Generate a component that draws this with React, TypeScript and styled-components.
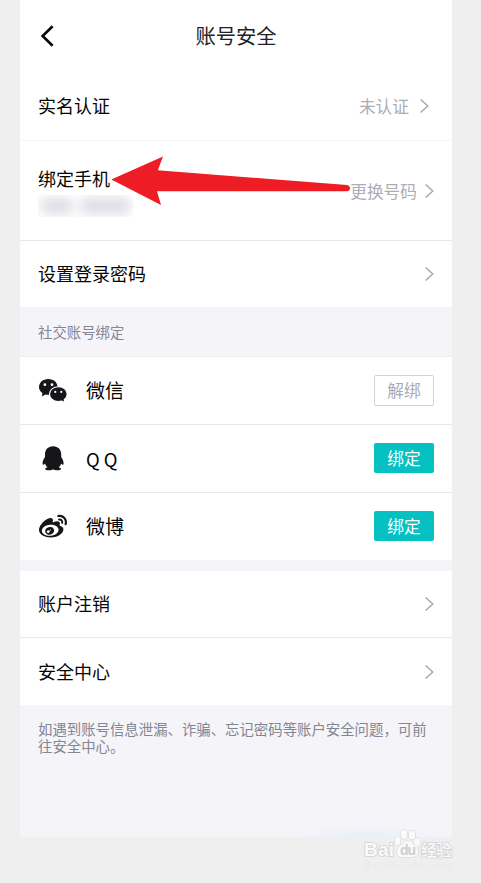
import React from 'react';
import styled, { createGlobalStyle } from 'styled-components';
import { FaWeibo } from 'react-icons/fa';

const GlobalStyle = createGlobalStyle`
  * { box-sizing: border-box; }
  body {
    margin: 0;
    background: #efefef;
    font-family: "Noto Sans CJK SC", sans-serif;
    color: #050505;
  }
`;

const Page = styled.div`
  position: relative;
  width: 481px;
  height: 883px;
  padding-left: 20px;
  overflow: hidden;
`;

const Screen = styled.main`
  width: 432px;
  height: 837px;
  display: flex;
  flex-direction: column;
  background: #f4f4f9;
`;

const Header = styled.header`
  height: 71px;
  flex: none;
  display: grid;
  grid-template-columns: 54px 1fr 54px;
  align-items: center;
  background: #fff;
`;

const BackButton = styled.button`
  display: flex;
  width: 100%;
  padding: 0 0 0 19px;
  border: 0;
  background: none;
`;

const Title = styled.h1`
  margin: 0;
  padding-bottom: 2px;
  font-size: 20.3px;
  font-weight: 400;
  line-height: 30px;
  text-align: center;
  color: #222;
`;

const Row = styled.div<{ $height: number; $line?: string }>`
  height: ${(p) => p.$height}px;
  flex: none;
  display: flex;
  align-items: center;
  padding: 0 18px;
  background: #fff;
  border-bottom: ${(p) => (p.$line ? `1px solid ${p.$line}` : '0')};
`;

const Label = styled.span`
  padding-bottom: 2px;
  font-size: 18px;
  line-height: 26px;
  white-space: nowrap;
`;

const PhoneInfo = styled.div`
  display: flex;
  flex-direction: column;
  gap: 2px;
`;

const HiddenNumber = styled.div`
  display: flex;
  align-items: center;
  gap: 7px;
  width: 96px;
  height: 22px;
  padding-left: 3px;
  overflow: hidden;
`;

const Smudge = styled.i<{ $width: number }>`
  width: ${(p) => p.$width}px;
  height: 16px;
  flex: none;
  background: #dcdce4;
  border-radius: 6px;
  filter: blur(6px);
`;

const Trailing = styled.div<{ $inset?: number }>`
  display: flex;
  align-items: center;
  gap: 8px;
  margin-left: auto;
  padding-right: ${(p) => p.$inset ?? 0}px;
`;

const Value = styled.span<{ $gap?: number }>`
  font-size: 16.7px;
  line-height: 24px;
  color: #adadb7;
  margin-right: ${(p) => p.$gap ?? 0}px;
`;

const SectionTitle = styled.h2`
  height: 50px;
  flex: none;
  margin: 0;
  padding: 0 18px;
  border-bottom: 1px solid #ececf0;
  font-size: 14.4px;
  font-weight: 400;
  line-height: 50px;
  color: #858592;
`;

const IconSlot = styled.div`
  width: 30px;
  height: 30px;
  margin-right: 18px;
  display: flex;
  align-items: center;
  justify-content: center;
  color: #15151a;
`;

const AccountName = styled.span<{ $latin?: boolean }>`
  padding-bottom: ${(p) => (p.$latin ? 0 : 2)}px;
  font-size: ${(p) => (p.$latin ? 18.5 : 19)}px;
  line-height: 28px;
`;

const BindButton = styled.button<{ $bound?: boolean }>`
  width: 60px;
  height: ${(p) => (p.$bound ? 31 : 30)}px;
  margin: 0 0 ${(p) => (p.$bound ? 0 : 1)}px auto;
  padding: 0 0 1px;
  border: ${(p) => (p.$bound ? '1px solid #d2d2d8' : '0')};
  border-radius: 2px;
  background: ${(p) => (p.$bound ? '#fff' : '#06c1c1')};
  color: ${(p) => (p.$bound ? '#aaaab6' : '#fff')};
  font: 400 16.7px/28px "Noto Sans CJK SC", sans-serif;
`;

const Divider = styled.div`
  height: 11px;
  flex: none;
`;

const Note = styled.p`
  margin: 0;
  padding: 15px 18px 0;
  font-size: 14.4px;
  line-height: 17px;
  color: #858592;
`;

const ArrowOverlay = styled.svg`
  position: absolute;
  left: 110px;
  top: 154px;
`;

const Glow = styled.div`
  position: absolute;
  left: 300px;
  top: 825px;
  width: 140px;
  height: 12px;
  background: radial-gradient(ellipse 50% 100% at 48% 100%, #e8eff8, transparent);
`;

const Watermark = styled.div`
  position: absolute;
  left: 364px;
  top: 827px;
  width: 91px;
  height: 46px;
`;

const Chevron = () => (
  <svg width="10" height="16" viewBox="0 0 10 16" fill="none" stroke="#a6a6ac" strokeWidth="1.4">
    <path d="M1.600 1.500 8.800 8l-7.200 6.500" />
  </svg>
);

const WechatIcon = () => (
  <svg width="30" height="30" viewBox="0 0 30 30" fill="currentColor">
    <path d="M10.300 3C4.900 3 1 6.600 1 11c0 2.700 1.400 4.700 3.500 6.100l-.7 3.500 3.600-2.200c5.800 1.700 12.200-1.700 12.200-7.400C19.600 6.600 15.600 3 10.300 3z" />
    <path
      d="M20.400 10.700c-5 0-8.900 3.200-8.900 7.400s3.900 7.500 8.900 7.500c1.200 0 2.300-.2 3.300-.5l3 1.500-.5-2.800c1.800-1.300 3-3.300 3-5.700 0-4.200-3.900-7.400-8.800-7.400z"
      stroke="#fff"
      strokeWidth="1.100"
    />
    <g fill="#fff">
      <circle cx="6.900" cy="8.700" r="1.400" />
      <circle cx="14" cy="8.700" r="1.400" />
      <circle cx="17.300" cy="15.900" r="1.100" />
      <circle cx="23.300" cy="15.900" r="1.100" />
    </g>
  </svg>
);

const QqIcon = () => (
  <svg width="30" height="30" viewBox="0 0 30 30" fill="currentColor">
    <path d="M15.100 2.200c-5.200 0-8.100 3.600-8.100 8.200v2.500c-1.600 2.200-2.600 4.700-2.400 6.900.1 1.500 1.100 1.300 2.500-.4.500 1.600 1.200 2.900 2.400 3.900-1.600.5-2.400 1.100-2.300 1.800.2 1.600 6.500 1.600 7.900.1 1.400 1.500 7.700 1.500 7.900-.1.100-.7-.7-1.300-2.300-1.800 1.200-1 2-2.300 2.400-3.900 1.400 1.700 2.400 1.900 2.500.4.200-2.200-.8-4.700-2.400-6.900v-2.500c0-4.600-2.900-8.200-8.100-8.200z" />
  </svg>
);

const BackIcon = () => (
  <svg width="16" height="24" viewBox="0 0 16 24" fill="none" stroke="#080808" strokeWidth="2.600">
    <path d="M13.600 2.200 3.600 12l10 9.800" />
  </svg>
);

const BaiduMark = () => (
  <svg width="91" height="46" viewBox="0 0 91 46" stroke="#d3d3d3" fill="#fafafa" strokeWidth="1">
    <g fontFamily="Liberation Sans, sans-serif" paintOrder="stroke">
      <text x="0" y="29" fontSize="19" fontWeight="700" strokeWidth="1.600" textLength="30">Bai</text>
      <ellipse cx="33.500" cy="14" rx="3" ry="4.200" />
      <ellipse cx="40" cy="7.300" rx="3.300" ry="4.600" />
      <ellipse cx="48" cy="8" rx="3.300" ry="4.600" />
      <ellipse cx="53" cy="15.500" rx="3" ry="4.200" />
      <path d="M43.500 14c-3.500 0-4.500 3.200-7.500 5.500-5 3-3.500 10.500 2 10.500h11c5.500 0 7-7.500 3-10.500-3-2.300-4-5.500-8.500-5.500z" />
      <text x="36" y="28" fontSize="14" fontWeight="700" fill="#cecece" stroke="none" textLength="16">du</text>
      <text x="0" y="42" fontSize="10" fill="#f3f3f3" stroke="#e3e3e3" strokeWidth=".6" textLength="89">jingyan.baidu.com</text>
    </g>
    <text x="57" y="28.500" fontSize="16" fontWeight="500" fontFamily="Noto Sans CJK SC, sans-serif" strokeWidth="1.600" paintOrder="stroke" textLength="31">经验</text>
  </svg>
);

export default function App() {
  return (
    <>
      <GlobalStyle />
      <Page>
        <Screen>
          <Header>
            <BackButton aria-label="返回"><BackIcon /></BackButton>
            <Title>账号安全</Title>
          </Header>
          <Row $height={70} $line="#f4f4f4">
            <Label>实名认证</Label>
            <Trailing $inset={5}><Value $gap={2}>未认证</Value><Chevron /></Trailing>
          </Row>
          <Row $height={100} $line="#e8e8ea">
            <PhoneInfo>
              <Label>绑定手机</Label>
              <HiddenNumber>
                <Smudge $width={32} />
                <Smudge $width={50} />
              </HiddenNumber>
            </PhoneInfo>
            <Trailing><Value $gap={-1}>更换号码</Value><Chevron /></Trailing>
          </Row>
          <Row $height={66}>
            <Label>设置登录密码</Label>
            <Trailing><Chevron /></Trailing>
          </Row>
          <SectionTitle>社交账号绑定</SectionTitle>
          <Row $height={68} $line="#e8e8ea">
            <IconSlot><WechatIcon /></IconSlot>
            <AccountName>微信</AccountName>
            <BindButton $bound>解绑</BindButton>
          </Row>
          <Row $height={68} $line="#e8e8ea">
            <IconSlot><QqIcon /></IconSlot>
            <AccountName $latin>Q Q</AccountName>
            <BindButton>绑定</BindButton>
          </Row>
          <Row $height={67}>
            <IconSlot><FaWeibo size={28} /></IconSlot>
            <AccountName>微博</AccountName>
            <BindButton>绑定</BindButton>
          </Row>
          <Divider />
          <Row $height={67} $line="#e8e8ea">
            <Label>账户注销</Label>
            <Trailing><Chevron /></Trailing>
          </Row>
          <Row $height={67}>
            <Label>安全中心</Label>
            <Trailing><Chevron /></Trailing>
          </Row>
          <Note>如遇到账号信息泄漏、诈骗、忘记密码等账户安全问题，可前往安全中心。</Note>
        </Screen>
        <ArrowOverlay width="242" height="54" viewBox="0 0 242 54" fill="#ee1c25">
          <path d="M1.300 25.500 53 2.500 47.800 16.200 237 31c4 .6 4 6 0 6.200L47 37.300 51 51z" />
        </ArrowOverlay>
        <Glow />
        <Watermark><BaiduMark /></Watermark>
      </Page>
    </>
  );
}
